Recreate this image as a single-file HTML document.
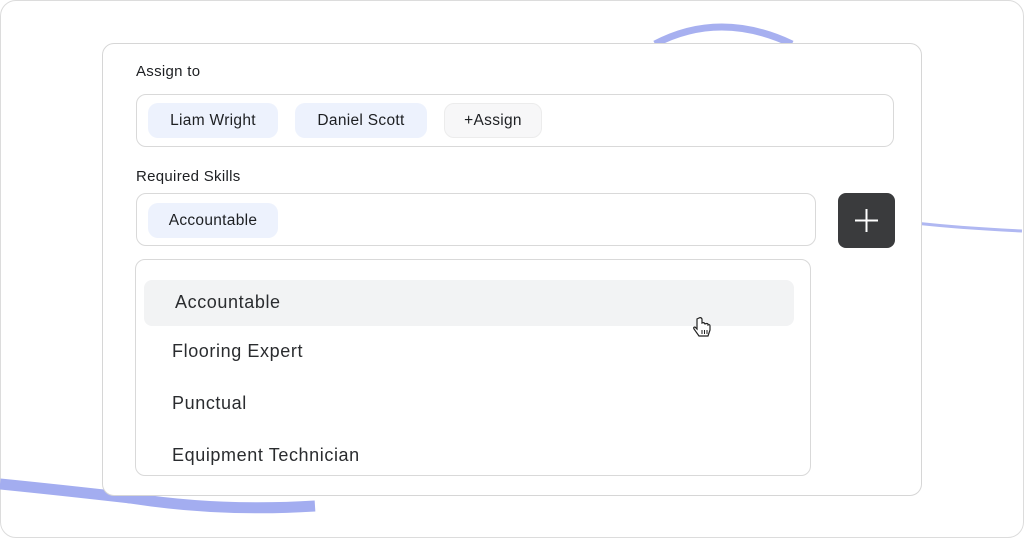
<!DOCTYPE html>
<html><head><style>
*{margin:0;padding:0;box-sizing:border-box}
body{width:1024px;height:538px;background:#fff;font-family:"Liberation Sans",sans-serif;position:relative;overflow:hidden;color:#1d1f22}
.frame{position:absolute;left:0;top:0;width:1024px;height:538px;border:1px solid #dcdcdc;border-radius:16px}
.card{position:absolute;left:102px;top:43px;width:820px;height:453px;border:1px solid #d6d6d6;border-radius:12px;background:#fff}
.lbl{position:absolute;font-size:15px;letter-spacing:0.3px;color:#1d1f22}
.box{position:absolute;border:1px solid #d9d9d9;border-radius:10px;background:#fff}
.chip{position:absolute;height:35px;border-radius:10px;background:#edf2fd;font-size:15.5px;letter-spacing:0.3px;display:flex;align-items:center;justify-content:center;color:#1d1f22}
.item{position:absolute;font-size:18px;letter-spacing:0.6px;color:#2a2c2f}
</style></head><body>
<div class="frame"></div>
<svg width="1024" height="538" style="position:absolute;left:0;top:0">
<path d="M655 44 Q720 10 792 44" stroke="#a7b0f0" stroke-width="7" fill="none"/>
<path d="M915 223 Q960 228 1022 231" stroke="#b0b8f2" stroke-width="3" fill="none"/>
<path d="M0 484 Q60 490 130 498 Q220 512 315 506" stroke="#a3adf0" stroke-width="11" fill="none"/>
</svg>
<div class="card"></div>
<div class="lbl" style="left:136px;top:63px">Assign to</div>
<div class="box" style="left:136px;top:94px;width:758px;height:53px"></div>
<div class="chip" style="left:148px;top:103px;width:130px">Liam Wright</div>
<div class="chip" style="left:295px;top:103px;width:132px">Daniel Scott</div>
<div class="chip" style="left:444px;top:103px;width:98px;background:#f7f7f8;border:1px solid #ececec">+Assign</div>
<div class="lbl" style="left:136px;top:168px">Required Skills</div>
<div class="box" style="left:136px;top:193px;width:680px;height:53px"></div>
<div class="chip" style="left:148px;top:203px;width:130px">Accountable</div>
<div style="position:absolute;left:838px;top:193px;width:57px;height:55px;background:#3a3b3d;border-radius:8px">
<svg width="57" height="55"><path d="M28.5 16V39M17 27.5H40" stroke="#fff" stroke-width="2"/></svg></div>
<div class="box" style="left:135px;top:259px;width:676px;height:217px"></div>
<div style="position:absolute;left:144px;top:280px;width:650px;height:46px;background:#f2f3f4;border-radius:8px"></div>
<div class="item" style="left:175px;top:292px">Accountable</div>
<div class="item" style="left:172px;top:341px">Flooring Expert</div>
<div class="item" style="left:172px;top:393px">Punctual</div>
<div class="item" style="left:172px;top:445px">Equipment Technician</div>
<svg width="20" height="22" style="position:absolute;left:692px;top:317px"><path d="M5 2V12L3 10Q1 10 2 12L7 19H16L18 13V9Q18 7 16 8V7Q15 6 13 7Q12 5 10 6V2Q9 0 7 1Z" fill="#fff" stroke="#222" stroke-width="1.2"/><path d="M10 13V17M12.5 13V17M15 13V17" stroke="#222"/></svg>
</body></html>
